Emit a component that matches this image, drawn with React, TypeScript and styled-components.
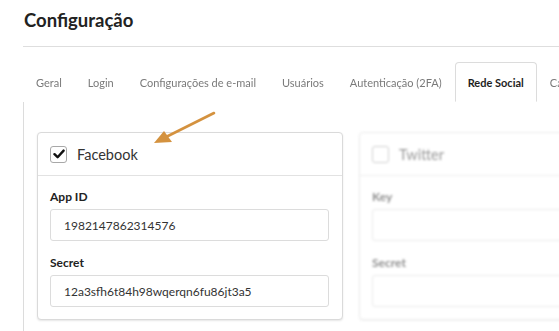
import React from "react"
import styled, { createGlobalStyle } from 'styled-components'

const GlobalStyle = createGlobalStyle`
body {
  margin: 0;
  background: #fff;
  font-family: Lato, "Open Sans", "Liberation Sans", sans-serif;
  color: #333;
  overflow: hidden;
}
`

const Page = styled.div`
position: relative;
width: 900px;
padding-left: 23px;
`

const PageHeader = styled.div`
padding-top: 8px;
height: 38px;
border-bottom: 1px solid #dedede;
`

const Title = styled.h1`
margin: 0 0 0 1px;
font-size: 18.5px;
line-height: 24px;
font-weight: 700;
color: #222;
`

const TabList = styled.div`
display: flex;
margin-top: 15px;
border-bottom: 1px solid #dcdcdc;
`

const Tab = styled.div<{ $active?: boolean }>`
height: 38px;
display: flex;
align-items: center;
padding: 0 12px;
font-size: 11px;
font-weight: ${p => (p.$active ? 700 : 400)};
border: 1px solid ${p => (p.$active ? '#dcdcdc' : 'transparent')};
border-bottom-color: ${p => (p.$active ? '#fff' : 'transparent')};
border-radius: 4px 4px 0 0;
margin-bottom: -1px;
background: #fff;
color: ${p => (p.$active ? '#1e1e1e' : '#7a7a7a')};
filter: ${p => (p.$active ? 'none' : 'blur(0.6px)')};
white-space: nowrap;
`

const TabContent = styled.div`
border-left: 1px solid #dcdcdc;
padding: 30px 0 20px 13px;
display: grid;
grid-template-columns: 306px 306px;
gap: 16px;
align-items: start;
`

const Panel = styled.div<{ $disabled?: boolean }>`
border: 1px solid #dadada;
border-radius: 4px;
box-shadow: 0 1px 2px rgba(0, 0, 0, 0.1);
background: #fff;
opacity: ${p => (p.$disabled ? 0.5 : 1)};
filter: ${p => (p.$disabled ? 'blur(0.9px)' : 'none')};
`

const PanelHeader = styled.div`
height: 42px;
display: flex;
align-items: center;
gap: 10px;
padding: 0 12px;
border-bottom: 1px solid #e2e2e2;
`

const Check = styled.span`
width: 15px;
height: 15px;
border: 1px solid #a8a8a8;
border-radius: 3px;
display: flex;
align-items: center;
justify-content: center;
background: #fff;
`

const PanelTitle = styled.span`
font-size: 14.5px;
color: #333;
`

const PanelBody = styled.div`
padding: 13px 13px 12px 12px;
`

const Label = styled.div<{ $first?: boolean }>`
font-size: 12px;
line-height: 16px;
font-weight: 700;
color: #222;
margin: ${p => (p.$first ? '0' : '14px')} 0 4px;
`

const Input = styled.div`
height: 30px;
border: 1px solid #dcdcdc;
border-radius: 3px;
padding: 0 13px;
display: flex;
align-items: center;
font-size: 12px;
color: #333;
`

const Arrow = styled.svg`
position: absolute;
left: 148px;
top: 106px;
`

const tabs = ['Geral', 'Login', 'Configurações de e-mail', 'Usuários', 'Autenticação (2FA)', 'Rede Social', 'Campos']

type Field = { label: string, value: string }

const SocialPanel = ({ name, checked, fields }: { name: string, checked?: boolean, fields: Field[] }) => (
  <Panel $disabled={!checked}>
    <PanelHeader>
      <Check>
        {checked && (
          <svg width="12" height="10" viewBox="0 0 12 10">
            <path d="M1.5 5.2 L4.6 8.2 L10.6 1.6" fill="none" stroke="#111" strokeWidth="2.4" strokeLinecap="round" strokeLinejoin="round" />
          </svg>
        )}
      </Check>
      <PanelTitle>{name}</PanelTitle>
    </PanelHeader>
    <PanelBody>
      {fields.map((f, i) => (
        <React.Fragment key={f.label}>
          <Label $first={i === 0}>{f.label}</Label>
          <Input>{f.value}</Input>
        </React.Fragment>
      ))}
    </PanelBody>
  </Panel>
)

export default function App() {
  return (
    <Page>
      <GlobalStyle />
      <PageHeader>
        <Title>Configuração</Title>
      </PageHeader>
      <TabList>
        {tabs.map(t => (
          <Tab key={t} $active={t === 'Rede Social'}>{t}</Tab>
        ))}
      </TabList>
      <TabContent>
        <SocialPanel
          name="Facebook"
          checked
          fields={[
            { label: 'App ID', value: '1982147862314576' },
            { label: 'Secret', value: '12a3sfh6t84h98wqerqn6fu86jt3a5' },
          ]}
        />
        <SocialPanel
          name="Twitter"
          fields={[
            { label: 'Key', value: '' },
            { label: 'Secret', value: '' },
          ]}
        />
      </TabContent>
      <Arrow width="72" height="42" viewBox="0 0 72 42">
        <line x1="66" y1="7" x2="14" y2="33" stroke="#d4923f" strokeWidth="2.6" strokeLinecap="round" />
        <polygon points="6,37 16,25 24,36" fill="#d4923f" />
      </Arrow>
    </Page>
  )
}
